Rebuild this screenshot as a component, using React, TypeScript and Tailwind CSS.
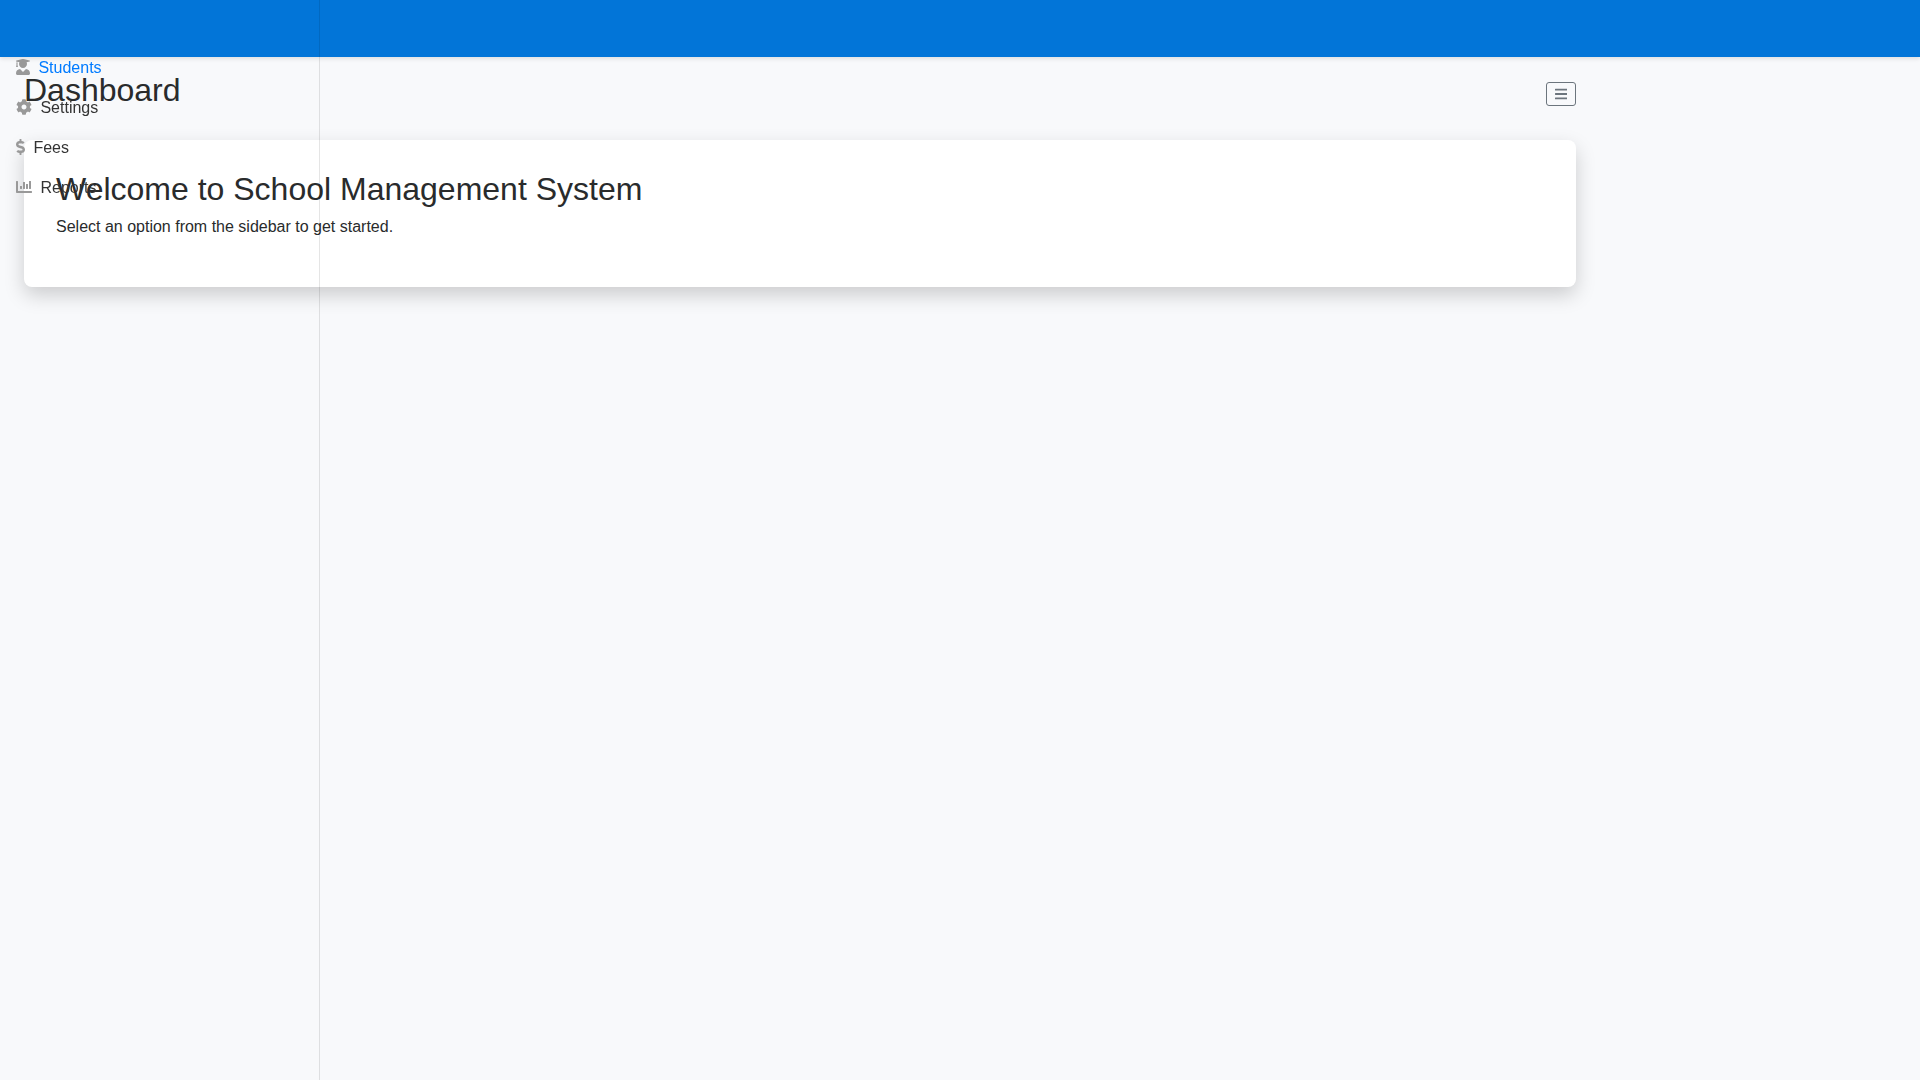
import React from 'react';
import type { IconType } from 'react-icons';
import { FaBars, FaChartBar, FaCog, FaDollarSign, FaUserGraduate } from 'react-icons/fa';

interface NavItem {
  label: string;
  icon: IconType;
  iconClass: string;
  active?: boolean;
}

const navItems: NavItem[] = [
  { label: 'Students', icon: FaUserGraduate, iconClass: 'w-3.5', active: true },
  { label: 'Settings', icon: FaCog, iconClass: 'w-4' },
  { label: 'Fees', icon: FaDollarSign, iconClass: 'w-[9px]' },
  { label: 'Reports', icon: FaChartBar, iconClass: 'w-4' },
];

const Navbar: React.FC = () => (
  <nav className="relative h-[57px] bg-[#0275d8] shadow-[0_2px_4px_rgba(0,0,0,0.1)]" />
);

// Overlay sidebar, sits above the navbar and the page content
const Sidebar: React.FC = () => (
  <aside className="fixed inset-y-0 left-0 z-10 w-1/6 pt-12 shadow-[inset_-1px_0_0_rgba(0,0,0,0.1)]">
    <ul>
      {navItems.map(({ label, icon: Icon, iconClass, active }) => (
        <li key={label}>
          <a
            href="#"
            className={`flex items-center px-4 py-2 ${active ? 'text-[#007bff]' : 'text-[#333]'}`}
          >
            <Icon className={`mr-[8.45px] mb-0.5 h-4 shrink-0 text-[#999] ${iconClass}`} />
            {label}
          </a>
        </li>
      ))}
    </ul>
  </aside>
);

const App: React.FC = () => {
  return (
    <div className="min-h-screen bg-[#f8f9fb] font-['Liberation_Sans',Arial,sans-serif] text-base text-[#292b2c]">
      <Navbar />
      <Sidebar />
      <main className="w-5/6 px-6 pt-4">
        <div className="mb-4 flex items-start justify-between pb-2">
          <h1 className="mb-2 text-[32px] leading-[1.1]">Dashboard</h1>
          <button
            type="button"
            className="mt-[9px] flex h-6 w-[30px] items-center justify-center rounded-[3px] border border-[#6c757d] text-[#6c757d]"
          >
            <FaBars className="h-3.5 w-[12.25px]" />
          </button>
        </div>

        <section className="rounded-lg bg-white p-8 shadow-[0_8px_20px_rgba(0,0,0,0.18)]">
          <h2 className="mb-2 text-[32px] leading-[1.1]">Welcome to School Management System</h2>
          <p className="mb-4">Select an option from the sidebar to get started.</p>
        </section>
      </main>
    </div>
  );
};

export default App;
